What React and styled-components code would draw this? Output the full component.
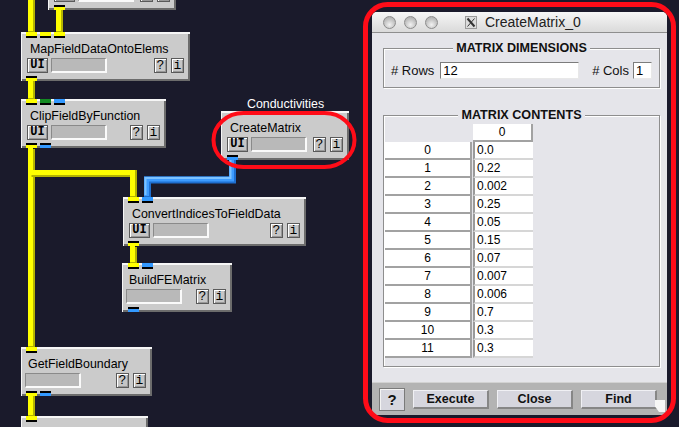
import React from 'react';
import styled, { createGlobalStyle } from 'styled-components';

const GlobalStyle = createGlobalStyle`
  html, body {
    margin: 0;
    padding: 0;
  }
  body {
    background: #1a1a2b;
    font-family: 'Liberation Sans', Arial, sans-serif;
  }
`;

const portColors = {
  yellow: '#ffff00',
  green: '#148a22',
  blue: '#3399ff',
};

// network modules on the editor canvas
const modules = [
  { id: 'a', title: '', x: 48, y: -39, w: 128, ui: true, outputs: [[6, 'yellow']] },
  {
    id: 'b',
    title: 'MapFieldDataOntoElems',
    x: 21,
    y: 32,
    w: 169,
    ui: true,
    inputs: [[5, 'yellow'], [19, 'yellow'], [33, 'yellow']],
    outputs: [[5, 'yellow']],
  },
  {
    id: 'c',
    title: 'ClipFieldByFunction',
    x: 21,
    y: 99,
    w: 145,
    ui: true,
    inputs: [[5, 'yellow'], [19, 'green'], [33, 'blue']],
    outputs: [[5, 'yellow'], [19, 'blue']],
  },
  { id: 'd', title: 'CreateMatrix', x: 221, y: 111, w: 128, ui: true, outputs: [[6, 'blue']] },
  {
    id: 'e',
    title: 'ConvertIndicesToFieldData',
    x: 123,
    y: 197,
    w: 183,
    ui: true,
    inputs: [[5, 'yellow'], [19, 'blue']],
    outputs: [[5, 'yellow']],
  },
  {
    id: 'f',
    title: 'BuildFEMatrix',
    x: 122,
    y: 263,
    w: 110,
    inputs: [[6, 'yellow'], [20, 'blue']],
    outputs: [[6, 'blue']],
  },
  {
    id: 'g',
    title: 'GetFieldBoundary',
    x: 21,
    y: 347,
    w: 131,
    inputs: [[5, 'yellow']],
    outputs: [[5, 'yellow'], [19, 'blue']],
  },
  { id: 'h', title: '', x: 21, y: 416, w: 127, inputs: [[5, 'yellow']] },
];

const yellowPipes = [
  'M31.5 0V32',
  'M59.5 10V32',
  'M31.5 81V99',
  'M31.5 149V347',
  'M31.5 173.5H133.5V197',
  'M133.5 247V263',
  'M31.5 396V416',
];
const bluePipes = ['M232.5 160V180H147.5V197'];

const matrixValues = ['0.0', '0.22', '0.002', '0.25', '0.05', '0.15', '0.07', '0.007', '0.006', '0.7', '0.3', '0.3'];

export default function App() {
  return (
    <>
      <GlobalStyle />
      <Screen>
        <Wires width="679" height="427">
          {yellowPipes.map((d) => (
            <g key={d}>
              <path d={d} stroke="#b4b400" strokeWidth="7" fill="none" />
              <path d={d} transform="translate(-1 -1)" stroke="#ffff00" strokeWidth="5" fill="none" />
            </g>
          ))}
          {bluePipes.map((d) => (
            <g key={d}>
              <path d={d} stroke="#1f6fd0" strokeWidth="7" fill="none" />
              <path d={d} transform="translate(-1 -1)" stroke="#3d9bff" strokeWidth="5" fill="none" />
              <path d={d} transform="translate(-2 -2)" stroke="#7cc2ff" strokeWidth="2" fill="none" />
            </g>
          ))}
        </Wires>

        <NodeLabel>Conductivities</NodeLabel>

        {modules.map((m) => (
          <Node key={m.id} $x={m.x} $y={m.y} $w={m.w} $ui={m.ui}>
            {(m.inputs || []).map(([at, c]) => (
              <InPort key={at} $at={at} $c={c} />
            ))}
            <Title>{m.title}</Title>
            <Controls>
              {m.ui && <UIButton>UI</UIButton>}
              <Progress />
              <SmallButton $first>?</SmallButton>
              <SmallButton>i</SmallButton>
            </Controls>
            {(m.outputs || []).map(([at, c]) => (
              <OutPort key={at} $at={at} $c={c} />
            ))}
          </Node>
        ))}

        <Window>
          <TitleBar>
            <Light />
            <Light />
            <Light />
            <XIcon width="12" height="13" viewBox="0 0 12 13">
              <rect x="0.5" y="0.5" width="11" height="12" fill="#dcdcdc" stroke="#9a9a9a" />
              <path d="M2.5 2.5L9.5 10.5" stroke="#333" strokeWidth="2" />
              <path d="M9.5 2.5L2.5 10.5" stroke="#333" strokeWidth="1" />
            </XIcon>
            <WinTitle>CreateMatrix_0</WinTitle>
          </TitleBar>
          <Body>
            <Group>
              <Legend>MATRIX DIMENSIONS</Legend>
              <DimRow>
                <FieldLabel># Rows</FieldLabel>
                <TextField $grow value="12" readOnly />
                <FieldLabel $gap>
                  # Cols
                </FieldLabel>
                <TextField value="1" readOnly />
              </DimRow>
            </Group>
            <Group $second>
              <Legend>MATRIX CONTENTS</Legend>
              <Matrix>
                <Corner />
                <ColHead>0</ColHead>
                {matrixValues.map((v, i) => (
                  <React.Fragment key={i}>
                    <RowHead>{i}</RowHead>
                    <Cell>{v}</Cell>
                  </React.Fragment>
                ))}
              </Matrix>
            </Group>
          </Body>
          <ButtonBar>
            <HelpButton>?</HelpButton>
            <BarButton>Execute</BarButton>
            <BarButton>Close</BarButton>
            <BarButton>Find</BarButton>
            <Grip />
          </ButtonBar>
        </Window>

        <Marks width="679" height="427">
          <rect x="213.5" y="113" width="141" height="54" rx="30" ry="27" fill="none" stroke="#ff0c18" strokeWidth="4" />
          <rect x="365.5" y="4.5" width="308" height="416" rx="22" fill="none" stroke="#ff0c18" strokeWidth="5" />
        </Marks>
      </Screen>
    </>
  );
}

const Screen = styled.div`
  position: relative;
  width: 679px;
  height: 427px;
  overflow: hidden;
  background: #1a1a2b;
`;

const Wires = styled.svg`
  position: absolute;
  left: 0;
  top: 0;
`;

const Marks = styled.svg`
  position: absolute;
  left: 0;
  top: 0;
  pointer-events: none;
`;

const NodeLabel = styled.div`
  position: absolute;
  left: 247px;
  top: 97px;
  color: #ffffff;
  font-size: 12.4px;
  line-height: 15px;
`;

const Node = styled.div`
  position: absolute;
  left: ${(p) => p.$x}px;
  top: ${(p) => p.$y}px;
  width: ${(p) => p.$w}px;
  height: 49px;
  box-sizing: border-box;
  padding: 9px 6px 0 ${(p) => (p.$ui ? 6 : 4)}px;
  background: #cbcbcb;
  box-shadow: inset 1px 2px 0 #f6f6f6, inset -2px -2px 0 #6c6c6c;
`;

const InPort = styled.span`
  position: absolute;
  top: 0;
  left: ${(p) => p.$at}px;
  width: 11px;
  height: 4px;
  background: ${(p) => portColors[p.$c]};
  border-bottom: 2px solid #000;
`;

const OutPort = styled.span`
  position: absolute;
  bottom: 0;
  left: ${(p) => p.$at}px;
  width: 11px;
  height: 3px;
  background: ${(p) => portColors[p.$c]};
  border-top: 2px solid #000;
`;

const Title = styled.div`
  height: 16px;
  padding-left: 3px;
  font-size: 12.4px;
  line-height: 16px;
  color: #000;
  white-space: nowrap;
`;

const Controls = styled.div`
  display: flex;
  align-items: center;
  height: 15px;
  margin-top: 1px;
`;

const NodeButton = styled.div`
  box-sizing: border-box;
  height: 15px;
  border: 1px solid #5a5a5a;
  box-shadow: inset 1px 1px 0 #ffffff, inset -1px -1px 0 #989898;
  background: #c6c6c6;
  color: #000;
  font-family: 'Liberation Mono', 'Courier New', monospace;
  font-size: 13px;
  line-height: 13px;
  text-align: center;
`;

const UIButton = styled(NodeButton)`
  width: 21px;
  margin-right: 3px;
  font-weight: bold;
  font-size: 12px;
`;

const SmallButton = styled(NodeButton)`
  width: 13px;
  margin-left: ${(p) => (p.$first ? 'auto' : '4px')};
`;

const Progress = styled.div`
  box-sizing: border-box;
  width: 56px;
  height: 15px;
  background: #b9b9b9;
  border-style: solid;
  border-width: 1px 2px 2px 1px;
  border-color: #8a8a8a #fafafa #fafafa #8a8a8a;
`;

const Window = styled.div`
  position: absolute;
  left: 372px;
  top: 12px;
  width: 295px;
  height: 403px;
  display: flex;
  flex-direction: column;
  background: #e5e5ea;
  border-radius: 5px 5px 0 0;
  overflow: hidden;
`;

const TitleBar = styled.div`
  display: flex;
  align-items: center;
  height: 21px;
  box-sizing: border-box;
  padding-left: 11px;
  background: linear-gradient(#f6f6f6, #dadada);
  border-bottom: 1px solid #8e8e8e;
`;

const Light = styled.span`
  box-sizing: border-box;
  width: 13px;
  height: 13px;
  margin-right: 8px;
  border-radius: 50%;
  border: 1px solid #8c8c8c;
  background: radial-gradient(circle at 50% 70%, #f2f2f2 0%, #c4c4c4 55%, #a4a4a4 100%);
`;

const XIcon = styled.svg`
  margin-left: 19px;
  margin-right: 8px;
`;

const WinTitle = styled.span`
  font-size: 14px;
  color: #202020;
`;

const Body = styled.div`
  flex: 1;
  padding: 8px 7px 0 11px;
`;

const Group = styled.fieldset`
  margin: ${(p) => (p.$second ? '20px' : '0')} 0 0 0;
  padding: 0 ${(p) => (p.$second ? '1px 8px 1px' : '7px 8px 7px')};
  padding-top: ${(p) => (p.$second ? 2 : 7)}px;
  min-inline-size: 0;
  border: 1px solid #8e8e8e;
  box-shadow: 1px 1px 0 #ffffff, inset 1px 1px 0 #ffffff;
`;

const Legend = styled.legend`
  margin: 0 auto;
  padding: 0 3px;
  background: #e5e5ea;
  font-size: 12.6px;
  line-height: 14px;
  font-weight: bold;
  color: #111;
`;

const DimRow = styled.div`
  display: flex;
  align-items: center;
`;

const FieldLabel = styled.span`
  margin: 0 ${(p) => (p.$gap ? 4 : 6)}px 0 ${(p) => (p.$gap ? 13 : 0)}px;
  font-size: 13px;
  color: #111;
`;

const TextField = styled.input`
  box-sizing: border-box;
  flex: ${(p) => (p.$grow ? 1 : 'none')};
  width: ${(p) => (p.$grow ? 'auto' : '19px')};
  min-width: 0;
  height: 17px;
  margin: 0;
  padding: 0 2px;
  border-style: solid;
  border-width: 1px;
  border-color: #7c7c7c #e8e8e8 #e8e8e8 #7c7c7c;
  background: #ffffff;
  font-family: 'Liberation Sans', Arial, sans-serif;
  font-size: 13px;
  color: #000;
  outline: none;
`;

const Matrix = styled.div`
  display: grid;
  grid-template-columns: 87px 60px;
  grid-auto-rows: 18px;
  column-gap: 1px;
  font-size: 12px;
  color: #000;
`;

const Corner = styled.div``;

const ColHead = styled.div`
  box-sizing: border-box;
  background: #ffffff;
  border-right: 2px solid #a2a2a2;
  border-bottom: 2px solid #a2a2a2;
  text-align: center;
  line-height: 16px;
`;

const RowHead = styled(ColHead)``;

const Cell = styled.div`
  box-sizing: border-box;
  background: #ffffff;
  border-left: 2px solid #9a9a9a;
  border-bottom: 2px solid #d6d6d6;
  padding-left: 2px;
  line-height: 16px;
`;

const ButtonBar = styled.div`
  position: relative;
  display: flex;
  align-items: center;
  height: 33px;
  box-sizing: border-box;
  padding-left: 7px;
  background: #b3b3b3;
  border-top: 1px solid #d2d2d2;
`;

const HelpButton = styled.div`
  box-sizing: border-box;
  width: 26px;
  height: 23px;
  border: 1px solid #7a7a7a;
  box-shadow: inset 1px 1px 0 #f4f4f4;
  background: #d6d6de;
  text-align: center;
  font-weight: bold;
  font-size: 15px;
  line-height: 21px;
  color: #111;
`;

const BarButton = styled.div`
  box-sizing: border-box;
  width: 76px;
  height: 19px;
  margin-left: 8px;
  border-style: solid;
  border-width: 1px 2px 2px 1px;
  border-color: #f0f0f4 #868686 #868686 #f0f0f4;
  background: #d6d6de;
  text-align: center;
  font-weight: bold;
  font-size: 12.5px;
  line-height: 16px;
  color: #111;
`;

const Grip = styled.span`
  position: absolute;
  right: 2px;
  bottom: 3px;
  width: 10px;
  height: 12px;
  background: #f6f6f6;
  clip-path: polygon(0 0, 100% 0, 100% 100%, 40% 100%, 0 55%);
`;
